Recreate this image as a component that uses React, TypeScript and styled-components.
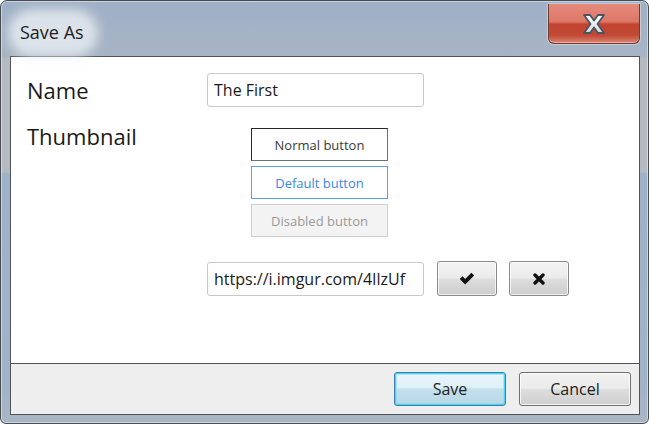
import styled, { createGlobalStyle } from "styled-components";

const GlobalStyle = createGlobalStyle`
    html, body {
        margin: 0;
        padding: 0;
        background: #ffffff;
    }
    body {
        font-family: "Open Sans", "Noto Sans", sans-serif;
    }
`;

function CloseGlyph() {
    return (
        <svg width="22" height="20" viewBox="0 0 22 20">
            <defs>
                <linearGradient id="xfill" x1="0" y1="0" x2="0" y2="1">
                    <stop offset="0" stopColor="#ffffff" />
                    <stop offset="1" stopColor="#d4d8de" />
                </linearGradient>
            </defs>
            <polygon
                points="1,1 7,1 11,6.5 15,1 21,1 14.5,10 21,19 15,19 11,13.5 7,19 1,19 7.5,10"
                fill="url(#xfill)"
                stroke="#4a5462"
                strokeWidth="1.8"
                strokeLinejoin="round"
            />
        </svg>
    );
}

function CheckIcon() {
    return (
        <svg width="16" height="13" viewBox="0 0 16 13">
            <path d="M0.8 7 L3.6 4.3 L6.2 6.9 L12.3 0.8 L15.2 3.6 L6.2 12.5 Z" fill="#111" />
        </svg>
    );
}

function CrossIcon() {
    return (
        <svg width="12" height="12" viewBox="0 0 12 12">
            <path
                d="M2 2 L10 10 M10 2 L2 10"
                stroke="#111"
                strokeWidth="3.4"
                strokeLinecap="round"
            />
        </svg>
    );
}

function App() {
    return (
        <>
            <GlobalStyle />
            <Window>
                <TitleBar>
                    <Title>Save As</Title>
                    <CloseButton aria-label="Close">
                        <CloseGlyph />
                    </CloseButton>
                </TitleBar>
                <Client>
                    <Body>
                        <Label>Name</Label>
                        <TextInput defaultValue="The First" />
                        <Label top>Thumbnail</Label>
                        <ThumbColumn>
                            <Samples>
                                <SampleButton variant="normal">Normal button</SampleButton>
                                <SampleButton variant="default">Default button</SampleButton>
                                <SampleButton variant="disabled" disabled>
                                    Disabled button
                                </SampleButton>
                            </Samples>
                            <UrlRow>
                                <TextInput defaultValue="https://i.imgur.com/4IlzUf" />
                                <IconButton aria-label="Accept">
                                    <CheckIcon />
                                </IconButton>
                                <IconButton aria-label="Clear">
                                    <CrossIcon />
                                </IconButton>
                            </UrlRow>
                        </ThumbColumn>
                    </Body>
                    <Footer>
                        <DialogButton primary>Save</DialogButton>
                        <DialogButton>Cancel</DialogButton>
                    </Footer>
                </Client>
            </Window>
        </>
    );
}

const Window = styled.div`
    box-sizing: border-box;
    width: 649px;
    height: 424px;
    display: flex;
    flex-direction: column;
    border: 1px solid #474b52;
    border-radius: 7px 7px 6px 6px;
    box-shadow: inset 0 0 0 1px rgba(255, 255, 255, 0.45);
    background: linear-gradient(
        to bottom,
        #9fb0c6 0px,
        #a7b4c4 55px,
        #b5bac1 58px,
        #b5bac1 171px,
        #9db1c9 173px,
        #a2b3c7 380px,
        #a8b5c5 100%
    );
    overflow: hidden;
`;

const TitleBar = styled.div`
    height: 55px;
    flex: none;
    display: flex;
    justify-content: space-between;
    align-items: flex-start;
`;

const Title = styled.span`
    position: relative;
    margin: 19px 0 0 19px;
    font-size: 18px;
    color: #1e1e1e;
    line-height: 24px;
    z-index: 0;
    &::before {
        content: "";
        position: absolute;
        left: -10px;
        right: -12px;
        top: -9px;
        bottom: -11px;
        border-radius: 22px;
        background: rgba(232, 237, 243, 0.8);
        box-shadow: 0 0 6px 3px rgba(225, 231, 238, 0.6);
        filter: blur(5px);
        z-index: -1;
    }
`;

const CloseButton = styled.button`
    box-sizing: border-box;
    width: 92px;
    height: 40px;
    margin: 3px 8px 0 0;
    padding: 0;
    display: flex;
    align-items: center;
    justify-content: center;
    border: 1px solid #6f3a34;
    border-top: none;
    border-radius: 0 0 6px 6px;
    background: linear-gradient(
        to bottom,
        #e6897b 0%,
        #dc7868 45%,
        #c3432f 52%,
        #c04a35 80%,
        #dc8574 100%
    );
    box-shadow: inset 0 -1px 0 rgba(255, 255, 255, 0.35),
        0 0 0 1px rgba(255, 255, 255, 0.35);
`;

const Client = styled.div`
    flex: 1;
    display: flex;
    flex-direction: column;
    margin: 0 8px 8px 9px;
    border: 1px solid #50545a;
    background: #ffffff;
`;

const Body = styled.div`
    flex: 1;
    display: grid;
    grid-template-columns: 180px 1fr;
    align-content: start;
    align-items: center;
    row-gap: 21px;
    padding: 16px 16px 0 16px;
`;

const Label = styled.span<{ top?: boolean }>`
    align-self: ${(props) => (props.top ? "start" : "center")};
    margin-top: ${(props) => (props.top ? "-7px" : "0")};
    font-size: 22px;
    line-height: 30px;
    color: #1a1a1a;
`;

const TextInput = styled.input`
    box-sizing: border-box;
    width: 217px;
    height: 34px;
    padding: 0 6px;
    border: 1px solid #c9c9c9;
    border-radius: 3px;
    font-family: "Open Sans", "Noto Sans", sans-serif;
    font-size: 16px;
    color: #1a1a1a;
    background: #ffffff;
    outline: none;
`;

const ThumbColumn = styled.div`
    align-self: start;
    display: flex;
    flex-direction: column;
`;

const Samples = styled.div`
    display: flex;
    flex-direction: column;
    gap: 5px;
    width: 137px;
    margin-left: 44px;
`;

const SampleButton = styled.button<{ variant: "normal" | "default" | "disabled" }>`
    box-sizing: border-box;
    height: 33px;
    font-family: "Open Sans", "Noto Sans", sans-serif;
    font-size: 13px;
    background: ${(props) => (props.variant === "disabled" ? "#f3f3f3" : "#ffffff")};
    color: ${(props) =>
        props.variant === "default"
            ? "#3c86e6"
            : props.variant === "disabled"
            ? "#9a9a9a"
            : "#3a3a3a"};
    border: 1px solid
        ${(props) =>
            props.variant === "default"
                ? "#5a9ff0"
                : props.variant === "disabled"
                ? "#cfcfcf"
                : "#2a2a2a"};
    border-right-color: ${(props) => (props.variant === "normal" ? "#707070" : "")};
    border-bottom-color: ${(props) => (props.variant === "normal" ? "#707070" : "")};
    padding: 0;
`;

const UrlRow = styled.div`
    display: flex;
    align-items: center;
    gap: 12px;
    margin-top: 24px;
    & > input {
        margin-right: 1px;
    }
`;

const IconButton = styled.button`
    box-sizing: border-box;
    width: 60px;
    height: 35px;
    padding: 0;
    display: flex;
    align-items: center;
    justify-content: center;
    border: 1px solid #8a8a8a;
    border-radius: 3px;
    background: linear-gradient(
        to bottom,
        #f3f3f3 0%,
        #ebebeb 48%,
        #dddddd 52%,
        #cdcdcd 100%
    );
    box-shadow: inset 0 0 0 1px rgba(255, 255, 255, 0.7);
`;

const Footer = styled.div`
    box-sizing: border-box;
    height: 51px;
    flex: none;
    display: flex;
    justify-content: flex-end;
    align-items: flex-start;
    gap: 13px;
    padding: 8px 8px 0 0;
    border-top: 1px solid #50545a;
    background: #eeeeee;
`;

const DialogButton = styled.button<{ primary?: boolean }>`
    box-sizing: border-box;
    width: 112px;
    height: 34px;
    padding: 0;
    font-family: "Open Sans", "Noto Sans", sans-serif;
    font-size: 16px;
    color: #222222;
    border-radius: 3px;
    border: 1px solid ${(props) => (props.primary ? "#3c7fb1" : "#707070")};
    background: ${(props) =>
        props.primary
            ? "linear-gradient(to bottom, #e8f5fb 0%, #e0f0f8 46%, #c2dfec 50%, #b8d7e6 100%)"
            : "linear-gradient(to bottom, #f2f2f2 0%, #ebebeb 48%, #dddddd 52%, #cfcfcf 100%)"};
    box-shadow: ${(props) =>
        props.primary
            ? "inset 0 0 0 1px #48d4f4, inset 0 0 0 2px rgba(120, 220, 250, 0.5)"
            : "inset 0 0 0 1px rgba(255, 255, 255, 0.8)"};
`;

export default App;
